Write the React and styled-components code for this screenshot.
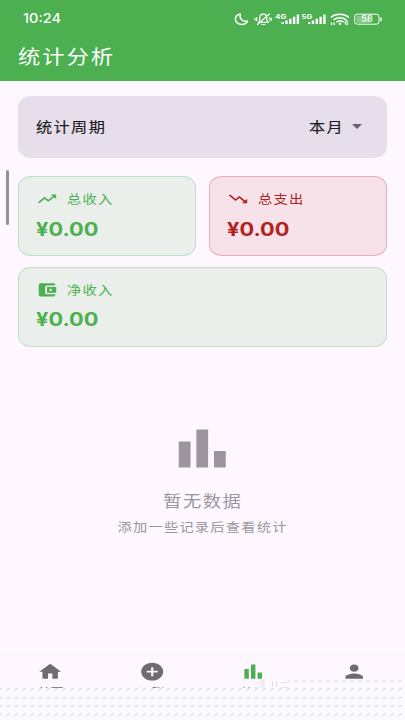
import React from 'react';
import styled, { createGlobalStyle } from 'styled-components';

const GREEN = '#4caf50';
const RED = '#b3221e';

const PATHS = {
  up: 'M16 6l2.29 2.29-4.88 4.88-4-4L2 16.59 3.41 18l6-6 4 4 6.3-6.29L22 12V6z',
  down: 'M16 18l2.29-2.29-4.88-4.88-4 4L2 7.41 3.41 6l6 6 4-4 6.3 6.29L22 12v6z',
  wallet:
    'M21 18v1c0 1.1-.9 2-2 2H5c-1.11 0-2-.9-2-2V5c0-1.1.89-2 2-2h14c1.1 0 2 .9 2 2v1h-9c-1.11 0-2 .9-2 2v8c0 1.1.89 2 2 2h9zm-9-2h10V8H12v8zm4-2.5c-.83 0-1.5-.67-1.5-1.5s.67-1.5 1.5-1.5 1.5.67 1.5 1.5-.67 1.5-1.5 1.5z',
  bars: 'M4 9h4v11H4zM16 13h4v7h-4zM10 4h4v16h-4z',
  home: 'M10 20v-6h4v6h5v-8h3L12 3 2 12h3v8z',
  add: 'M12 2C6.48 2 2 6.48 2 12s4.48 10 10 10 10-4.48 10-10S17.52 2 12 2zm5 11h-4v4h-2v-4H7v-2h4V7h2v4h4v2z',
  person:
    'M12 12c2.21 0 4-1.79 4-4s-1.79-4-4-4-4 1.79-4 4 1.79 4 4 4zm0 2c-2.67 0-8 1.34-8 4v2h16v-2c0-2.66-5.33-4-8-4z',
};

const TABS = [
  { icon: 'home', label: '首页' },
  { icon: 'add', label: '记账' },
  { icon: 'bars', label: '统计', active: true },
  { icon: 'person', label: '' },
];

function Icon({ name, w, h }) {
  return (
    <Glyph
      width={w}
      height={h}
      viewBox="0 0 24 24"
      preserveAspectRatio="none"
      fill="currentColor"
    >
      <path d={PATHS[name]} />
    </Glyph>
  );
}

function StatusIcons() {
  return (
    <Glyph width="150" height="16" viewBox="234 10.5 150 16" fill="#fff">
      <path
        d="M240.4 13.6c-3 .5-5 2.6-5 5.1 0 2.9 2.7 5.2 6.2 5.2 2.7 0 5-1.3 5.9-3.3-4.6 1-8.6-2.2-7.100-7z"
        fill="none"
        stroke="#fff"
        strokeWidth="1.5"
        strokeLinejoin="round"
      />
      <g fill="none" stroke="#fff" strokeWidth="1.2" strokeLinecap="round">
        <path d="M258.6 21.8h9.6l-1.4-2v-2.6c0-2.2-1.4-3.6-3.5-3.6s-3.5 1.4-3.5 3.6v2.6zM261.8 24h3" />
        <path d="M257.5 24l11.8-10.5M256.7 17v3.2M255 17.8v1.6M269.9 17v3.2M271.5 17.8v1.6" />
      </g>
      <text x="275" y="18" fontSize="6.6" fontWeight="700" textLength="11.5" lengthAdjust="spacingAndGlyphs">
        4G
      </text>
      <text x="301.5" y="18" fontSize="6.6" fontWeight="700" textLength="11" lengthAdjust="spacingAndGlyphs">
        5G
      </text>
      {[281.5, 308].map(x => (
        <g key={x}>
          <rect x={x} y="21.5" width="2.4" height="2" />
          <rect x={x + 3.8} y="20" width="2.4" height="3.5" />
          <rect x={x + 7.6} y="18.2" width="2.4" height="5.3" />
          <rect x={x + 11.4} y="16.2" width="2.4" height="7.3" />
          <rect x={x + 15.2} y="14" width="2.4" height="9.5" />
        </g>
      ))}
      <path
        d="M330.8 17c5-4.200 13-4.200 18 0M333.500 19.400c3.700-2.900 9-2.900 12.700 0M336.300 21.600c2.100-1.600 5.100-1.600 7.200 0"
        fill="none"
        stroke="#fff"
        strokeWidth="1.5"
      />
      <circle cx="339.9" cy="23.2" r="1.2" />
      <path d="M330.8 24.5v-2.5h1.5v2.5zM333.5 24.5v-2.5h1.5v2.5z" />
      <text x="344.6" y="24.9" fontSize="6" fontWeight="700">
        6
      </text>
      <rect x="354.7" y="13.7" width="24.3" height="10" rx="2.6" fill="none" stroke="#fff" />
      <rect x="356.3" y="15.2" width="14" height="7" rx="1.2" opacity=".35" />
      <path d="M380.3 16.9h.6a1 1 0 0 1 1 1v1.8a1 1 0 0 1-1 1h-.6z" />
      <text x="361.3" y="21.7" fontSize="8.4" fontWeight="500" textLength="11.5" lengthAdjust="spacingAndGlyphs">
        58
      </text>
    </Glyph>
  );
}

function StatCard({ icon, label, tone = 'green', wide }) {
  return (
    <Card $tone={tone} $wide={wide}>
      <CardLabel>
        <Icon name={icon} w={22} h={17.8} />
        <Text $size={12.5}>{label}</Text>
      </CardLabel>
      <Amount>¥0.00</Amount>
    </Card>
  );
}

export default function App() {
  return (
    <Screen>
      <GlobalStyle />
      <Header>
        <StatusBar>
          <Clock>10:24</Clock>
          <StatusIcons />
        </StatusBar>
        <Title $size={19.6}>统计分析</Title>
      </Header>
      <Content>
        <Period>
          <Text $size={14.2} $medium>
            统计周期
          </Text>
          <Picker>
            <Text $size={14.2} $medium>
              本月
            </Text>
            <Caret />
          </Picker>
        </Period>
        <Cards>
          <StatCard icon="up" label="总收入" />
          <StatCard icon="down" label="总支出" tone="red" />
          <StatCard icon="wallet" label="净收入" wide />
        </Cards>
        <Empty>
          <Icon name="bars" w={70.5} h={57} />
          <EmptyTitle $size={16} $center>
            暂无数据
          </EmptyTitle>
          <Text $size={12.5} $center>
            添加一些记录后查看统计
          </Text>
        </Empty>
      </Content>
      <TabBar>
        {TABS.map(tab => (
          <Tab key={tab.icon} $active={tab.active}>
            <Icon name={tab.icon} w={26.4} h={21.4} />
            <TabLabel>{tab.label}</TabLabel>
          </Tab>
        ))}
      </TabBar>
      <Dots />
      <Patch />
      <DotsStep />
      <ScrollThumb />
    </Screen>
  );
}

const GlobalStyle = createGlobalStyle`
  * {
    box-sizing: border-box;
  }
  body {
    margin: 0;
    background: #fef7ff;
    font-family: Inter, 'Noto Sans CJK SC', sans-serif;
  }
`;

const Screen = styled.div`
  position: relative;
  display: flex;
  flex-direction: column;
  width: 405px;
  height: 720px;
  overflow: hidden;
  background: #fef7ff;
`;

const Glyph = styled.svg`
  display: block;
  flex: none;
`;

/* glyphs are wider than tall on this screen */
const Text = styled.span`
  display: block;
  width: max-content;
  font-family: 'Noto Sans CJK SC', sans-serif;
  font-size: ${p => p.$size}px;
  letter-spacing: ${p => p.$size * 0.085}px;
  -webkit-text-stroke: ${p => (p.$medium ? '0.15px currentColor' : '0')};
  line-height: 20px;
  white-space: nowrap;
  transform: scaleX(1.14);
  transform-origin: ${p => (p.$center ? 'center' : 'left')};
`;

const Header = styled.header`
  height: 81px;
  flex: none;
  color: #fff;
  background: ${GREEN};
`;

const StatusBar = styled.div`
  display: flex;
  align-items: center;
  justify-content: space-between;
  height: 37px;
  padding: 0 21px 0 23px;
`;

const Clock = styled.span`
  font-size: 12.5px;
  font-weight: 500;
  transform: scaleX(1.16);
  transform-origin: left;
`;

const Title = styled(Text)`
  margin: 9px 0 0 18px;
`;

const Content = styled.main`
  display: flex;
  flex-direction: column;
  flex: 1;
  padding: 14.5px 18px 0;
`;

const Period = styled.section`
  display: flex;
  align-items: center;
  justify-content: space-between;
  height: 62.5px;
  padding: 0 25px 1px 18px;
  border-radius: 13px / 11px;
  color: #1d1b20;
  background: #e6dfeb;
`;

const Picker = styled.div`
  display: flex;
  align-items: center;
  gap: 12px;
`;

const Caret = styled.i`
  margin-top: 1px;
  border: solid transparent;
  border-width: 5px 5.5px 0;
  border-top-color: #68636c;
`;

const Cards = styled.section`
  display: grid;
  grid-template-columns: 1fr 1fr;
  gap: 10.5px 13px;
  margin-top: 18px;
`;

const Card = styled.article`
  grid-column: ${p => (p.$wide ? '1 / -1' : 'auto')};
  height: 80px;
  padding: 12px 17.5px;
  border: 1px solid ${p => (p.$tone === 'red' ? '#e0b3ba' : '#bfdfc4')};
  border-radius: 13px / 11px;
  color: ${p => (p.$tone === 'red' ? RED : GREEN)};
  background: ${p => (p.$tone === 'red' ? '#f6e2e8' : '#ebefeb')};
`;

const CardLabel = styled.div`
  display: flex;
  align-items: center;
  gap: 9px;
  margin-left: -0.3px;
`;

const Amount = styled.strong`
  display: block;
  margin: 7.5px 0 0 -0.5px;
  width: max-content;
  font-size: 18.6px;
  font-weight: 700;
  line-height: 24px;
  transform: scaleX(1.17);
  transform-origin: left;
`;

const Empty = styled.section`
  display: flex;
  flex-direction: column;
  align-items: center;
  margin-top: 73px;
  color: #9c959f;
`;

const EmptyTitle = styled(Text)`
  margin: 13.5px 0 7px;
`;

const TabBar = styled.nav`
  display: flex;
  height: 66px;
  flex: none;
  border-top: 1px solid #f7f2f8;
`;

const Tab = styled.div`
  display: flex;
  flex-direction: column;
  flex: 1;
  align-items: center;
  padding-top: 6px;
  color: ${p => (p.$active ? GREEN : '#6f6b70')};
`;

const TabLabel = styled.span`
  font-size: 10.5px;
  line-height: 14px;
  margin-top: 4px;
  transform: scaleX(1.237);
`;

/* dotted sheet that lies over the lower part of the tab bar */
const Dots = styled.div`
  position: absolute;
  left: 0;
  top: 687.5px;
  width: 405px;
  height: 32.5px;
  background-color: #fbfaff;
  background-image: radial-gradient(circle, #b8b8be 0.4px, transparent 0.9px),
    radial-gradient(circle, #dadae2 0.4px, transparent 0.9px);
  background-size: 8px 8.4px;
  background-position: -3.5px -3.2px, -5px -2px;
`;

const DotsStep = styled(Dots)`
  left: 288px;
  top: 679.5px;
  width: 117px;
  height: 8.4px;
`;

const Patch = styled.div`
  position: absolute;
  left: 258px;
  top: 680px;
  width: 30px;
  height: 8px;
  background: linear-gradient(#e4e2ea, #e4e2ea) 23px 2px / 7px 1px no-repeat,
    linear-gradient(#e4e2ea, #e4e2ea) 23px 7px / 7px 1px no-repeat,
    linear-gradient(#e3dcf3, #e3dcf3) 14px 1px / 1px 6px no-repeat,
    linear-gradient(#e3dcf3, #e3dcf3) 18px 1px / 1px 6px no-repeat,
    linear-gradient(90deg, #f8f5fb, #ebe9f1 6px, #fcfbff 7px);
`;

const ScrollThumb = styled.div`
  position: absolute;
  left: 6px;
  top: 170px;
  width: 3px;
  height: 55px;
  border-radius: 2px;
  background: #929292;
`;
